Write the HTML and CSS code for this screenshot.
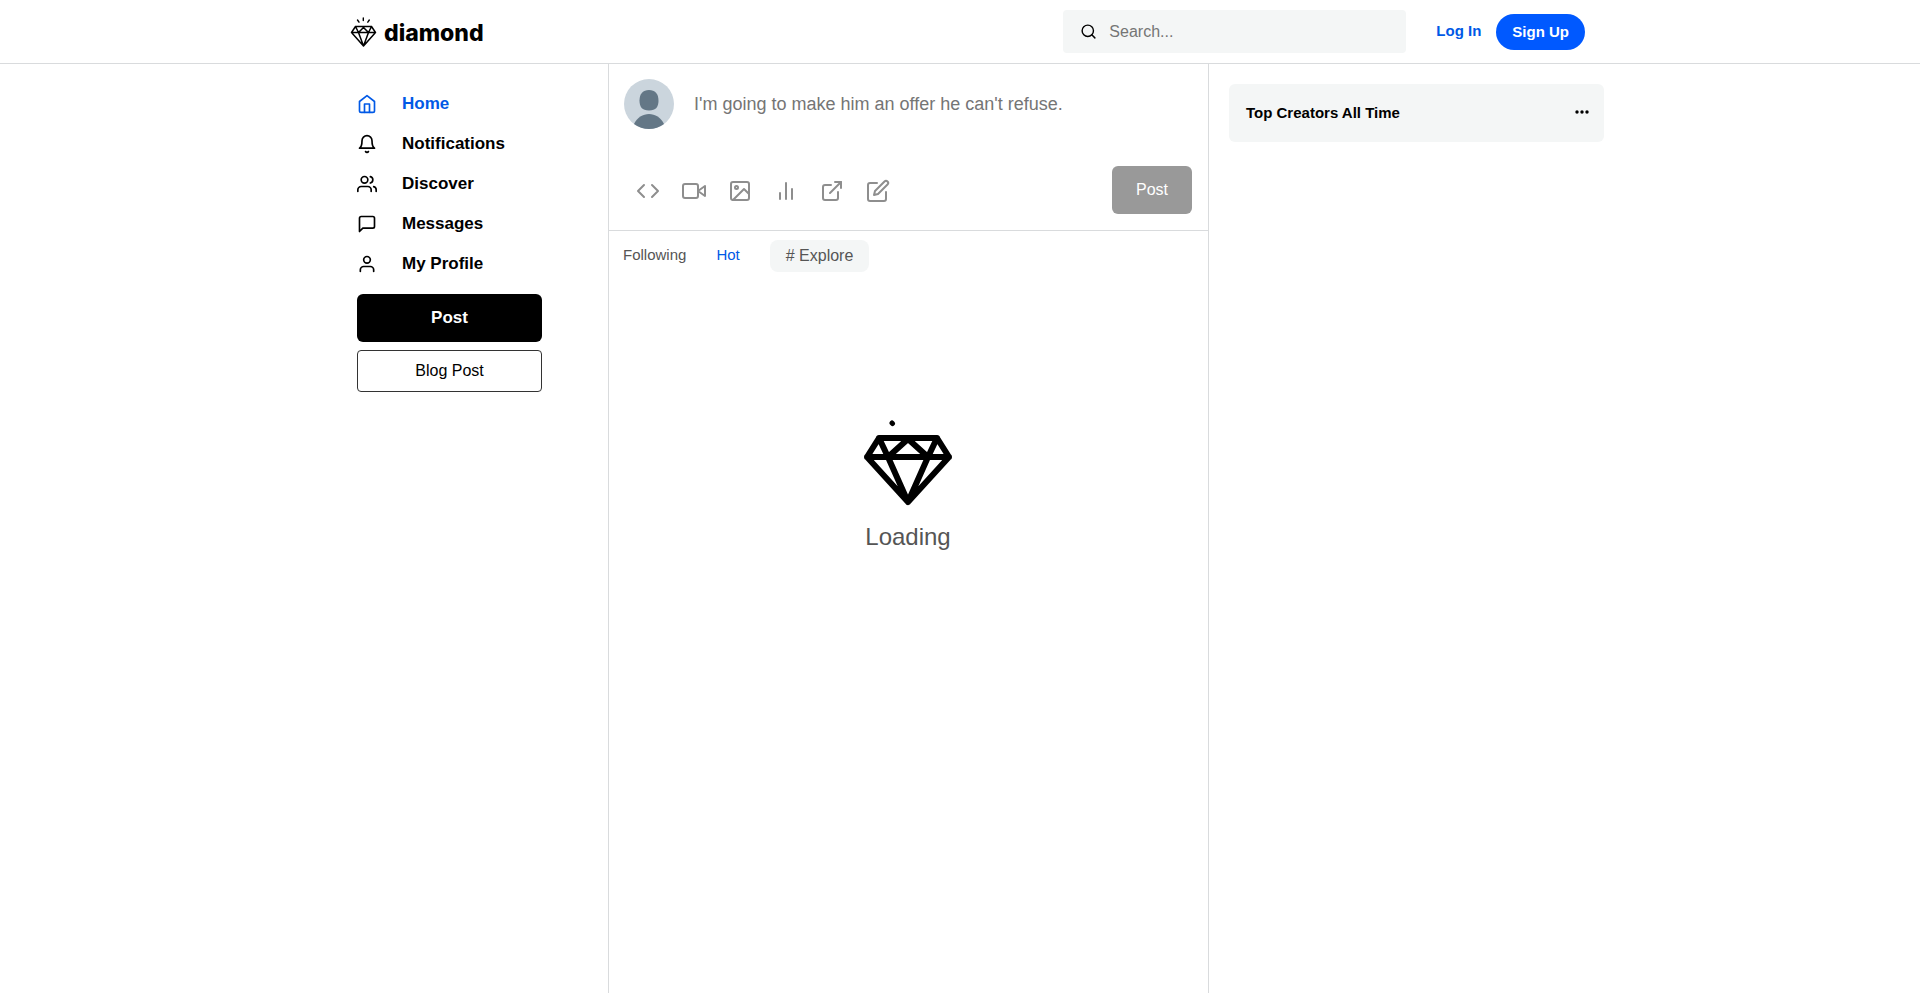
FILE: index.html
```
<!DOCTYPE html>
<html lang="en">
<head>
  <meta charset="UTF-8">
  <meta name="viewport" content="width=device-width, initial-scale=1.0">
  <title>Diamond</title>
  <link rel="stylesheet" href="styles.css">
</head>
<body>
  <header class="topbar">
    <div class="topbar-inner">
      <a href="#" class="logo" aria-label="diamond">
        <svg class="logo-mark" viewBox="0 0 28 32" fill="none" stroke="#000" stroke-width="1.500" stroke-linecap="round" stroke-linejoin="round">
          <path d="M5.500 10.500h16l4 6-12 13.500-12-13.500z M1.500 16.500h24 M5.500 10.500l3 6 5 13.500 5-13.500 3-6 M8.500 16.500l5-5 5 5"/>
          <path stroke-width="1.400" d="M13.300 2v2.500 M7.500 4l1.500 2.200 M19.300 4l-1.500 2.200"/>
        </svg>
        <span class="logo-text">diamond</span>
      </a>
      <form class="search">
        <label for="search" aria-label="Search">
          <svg class="search-icon" viewBox="0 0 24 24"><circle cx="11" cy="11" r="8"/><path d="M21 21l-4.350-4.350"/></svg>
        </label>
        <input type="text" id="search" placeholder="Search...">
      </form>
      <a href="#" class="login">Log In</a>
      <button type="button" class="signup">Sign Up</button>
    </div>
  </header>

  <div class="layout">
    <aside class="sidebar">
      <nav class="menu">
        <a href="#" class="menu-item active">
          <svg viewBox="0 0 24 24"><path d="M3 9l9-7 9 7v11a2 2 0 0 1-2 2H5a2 2 0 0 1-2-2z"/><path d="M9 22V12h6v10"/></svg>
          <span>Home</span>
        </a>
        <a href="#" class="menu-item">
          <svg viewBox="0 0 24 24"><path d="M18 8A6 6 0 0 0 6 8c0 7-3 9-3 9h18s-3-2-3-9"/><path d="M13.730 21a2 2 0 0 1-3.460 0"/></svg>
          <span>Notifications</span>
        </a>
        <a href="#" class="menu-item">
          <svg viewBox="0 0 24 24"><path d="M17 21v-2a4 4 0 0 0-4-4H5a4 4 0 0 0-4 4v2"/><circle cx="9" cy="7" r="4"/><path d="M23 21v-2a4 4 0 0 0-3-3.870"/><path d="M16 3.130a4 4 0 0 1 0 7.750"/></svg>
          <span>Discover</span>
        </a>
        <a href="#" class="menu-item">
          <svg viewBox="0 0 24 24"><path d="M21 15a2 2 0 0 1-2 2H7l-4 4V5a2 2 0 0 1 2-2h14a2 2 0 0 1 2 2z"/></svg>
          <span>Messages</span>
        </a>
        <a href="#" class="menu-item">
          <svg viewBox="0 0 24 24"><path d="M20 21v-2a4 4 0 0 0-4-4H8a4 4 0 0 0-4 4v2"/><circle cx="12" cy="7" r="4"/></svg>
          <span>My Profile</span>
        </a>
      </nav>
      <button type="button" class="btn-post">Post</button>
      <button type="button" class="btn-blog">Blog Post</button>
    </aside>

    <main class="feed">
      <form class="composer">
        <div class="composer-top">
          <svg class="avatar" viewBox="0 0 50 50">
            <circle cx="25" cy="25" r="25" fill="#cbd5dd"/>
            <path fill="#647786" d="M25 11c6 0 9.500 4 9.500 10.500S32 31.500 25 31.500 15.500 28 15.500 21.500 19 11 25 11z"/>
            <path fill="#647786" d="M10 45c3-6.500 9-10 15-10s12 3.500 15 10a25 25 0 0 1-30 0z"/>
          </svg>
          <textarea id="post-text" rows="1" aria-label="New post" placeholder="I'm going to make him an offer he can't refuse."></textarea>
        </div>
        <div class="composer-bottom">
          <div class="tools">
            <button type="button" aria-label="Embed"><svg viewBox="0 0 24 24"><path d="M16 18l6-6-6-6"/><path d="M8 6l-6 6 6 6"/></svg></button>
            <button type="button" aria-label="Video"><svg viewBox="0 0 24 24"><path d="M23 7l-7 5 7 5z"/><rect x="1" y="5" width="15" height="14" rx="2"/></svg></button>
            <button type="button" aria-label="Image"><svg viewBox="0 0 24 24"><rect x="3" y="3" width="18" height="18" rx="2"/><circle cx="8.500" cy="8.500" r="1.500"/><path d="M21 15l-5-5L5 21"/></svg></button>
            <button type="button" aria-label="Poll"><svg viewBox="0 0 24 24"><path d="M18 20V10"/><path d="M12 20V4"/><path d="M6 20v-6"/></svg></button>
            <button type="button" aria-label="Link"><svg viewBox="0 0 24 24"><path d="M18 13v6a2 2 0 0 1-2 2H5a2 2 0 0 1-2-2V8a2 2 0 0 1 2-2h6"/><path d="M15 3h6v6"/><path d="M10 14L21 3"/></svg></button>
            <button type="button" aria-label="Blog"><svg viewBox="0 0 24 24"><path d="M11 4H4a2 2 0 0 0-2 2v14a2 2 0 0 0 2 2h14a2 2 0 0 0 2-2v-7"/><path d="M18.500 2.500a2.121 2.121 0 0 1 3 3L12 15l-4 1 1-4z"/></svg></button>
          </div>
          <button type="submit" class="btn-submit" disabled>Post</button>
        </div>
      </form>

      <nav class="tabs">
        <a href="#">Following</a>
        <a href="#" class="active">Hot</a>
        <a href="#" class="explore"># Explore</a>
      </nav>

      <div class="loading">
        <svg viewBox="0 0 92 88" fill="none" stroke="#000" stroke-width="6" stroke-linecap="round" stroke-linejoin="round">
          <path d="M17 18h58l12 19-41 45L5 37z M5 37h82 M17 18l9 19 20 45 20-45 9-19 M26 37l20-18 20 18"/>
          <path stroke-width="5" d="M30 3l.500 .500"/>
        </svg>
        <p>Loading</p>
      </div>
    </main>

    <aside class="rightbar">
      <section class="card">
        <h2>Top Creators All Time</h2>
        <button type="button" aria-label="More">
          <svg viewBox="0 0 14 4"><circle cx="2" cy="2" r="1.700"/><circle cx="7" cy="2" r="1.700"/><circle cx="12" cy="2" r="1.700"/></svg>
        </button>
      </section>
    </aside>
  </div>
</body>
</html>
```

FILE: styles.css
```
* {
  box-sizing: border-box;
}
body {
  margin: 0;
  min-height: 100vh;
  display: flex;
  flex-direction: column;
  font-family: "Liberation Sans", Arial, sans-serif;
  font-size: 16px;
  color: #000;
  background-color: #fff;
}
a {
  color: inherit;
  text-decoration: none;
}
button {
  font-family: inherit;
  cursor: pointer;
}
input,
textarea {
  font-family: inherit;
  border: none;
  outline: none;
  background: none;
  padding: 0;
}
input::placeholder,
textarea::placeholder {
  color: #757575;
}

/* Header */
.topbar {
  border-bottom: 1px solid #d9dbdd;
}
.topbar-inner {
  max-width: 1288px;
  height: 63px;
  margin: 0 auto;
  padding: 0 19px 0 34px;
  display: flex;
  align-items: center;
}
.logo {
  display: flex;
  align-items: center;
  gap: 6px;
  margin-right: auto;
}
.logo-mark {
  width: 28px;
  height: 32px;
}
.logo-text {
  padding-top: 3px;
  font-family: Inter, sans-serif;
  font-size: 23px;
  font-weight: 800;
  line-height: 32px;
}
.search {
  display: flex;
  align-items: center;
  gap: 12px;
  width: 343px;
  height: 43px;
  padding: 0 17px;
  border-radius: 4px;
  background-color: #f4f6f6;
}
.search label {
  display: flex;
}
.search input {
  flex: 1;
  min-width: 0;
  font-size: 16px;
}
.search-icon {
  width: 17px;
  height: 17px;
}
.search-icon,
.menu-item svg,
.tools svg {
  fill: none;
  stroke: currentColor;
  stroke-width: 2;
  stroke-linecap: round;
  stroke-linejoin: round;
}
.login {
  margin: 0 15px 0 30px;
  padding-bottom: 2px;
  color: #0059e6;
  font-size: 15px;
  font-weight: bold;
}
.signup {
  height: 36px;
  padding: 0 16px;
  border: none;
  border-radius: 18px;
  background-color: #0059ff;
  color: #fff;
  font-size: 15px;
  font-weight: bold;
}

/* Columns */
.layout {
  flex: 1;
  width: 100%;
  max-width: 1288px;
  margin: 0 auto;
  display: grid;
  grid-template-columns: 292px 601px 1fr;
}

/* Sidebar */
.sidebar {
  padding: 20px 66px 20px 41px;
}
.menu {
  margin-bottom: 10px;
}
.menu-item {
  display: flex;
  align-items: center;
  gap: 25px;
  height: 40px;
  font-size: 17px;
  font-weight: bold;
}
.menu-item svg {
  width: 20px;
  height: 20px;
}
.menu-item.active {
  color: #0059e6;
}
.btn-post,
.btn-blog {
  display: block;
  width: 100%;
  border-radius: 6px;
}
.btn-post {
  height: 48px;
  margin-bottom: 8px;
  border: none;
  background-color: #000;
  color: #fff;
  font-size: 17px;
  font-weight: bold;
}
.btn-blog {
  height: 42px;
  border: 1px solid #333;
  border-radius: 4px;
  background-color: #fff;
  color: #000;
  font-size: 16px;
}

/* Feed */
.feed {
  border-left: 1px solid #d9dbdd;
  border-right: 1px solid #d9dbdd;
}
.composer {
  padding: 15px 16px 16px 15px;
  border-bottom: 1px solid #d9dbdd;
}
.composer-top {
  display: flex;
  align-items: center;
  gap: 20px;
  margin-bottom: 37px;
}
.avatar {
  width: 50px;
  height: 50px;
}
.composer textarea {
  flex: 1;
  height: 24px;
  font-size: 18px;
  line-height: 24px;
  resize: none;
  overflow: hidden;
}
.composer-bottom {
  display: flex;
  align-items: center;
  justify-content: space-between;
}
.tools {
  display: flex;
  gap: 22px;
  padding: 2px 0 0 12px;
}
.tools button {
  display: flex;
  padding: 0;
  border: none;
  background: none;
  color: #8e8e8e;
}
.tools svg {
  width: 24px;
  height: 24px;
}
.btn-submit {
  width: 80px;
  height: 48px;
  border: none;
  border-radius: 6px;
  background-color: #999;
  color: #fff;
  font-size: 16px;
}
.tabs {
  display: flex;
  align-items: flex-start;
  gap: 30px;
  padding: 9px 14px;
  color: #555;
  font-size: 15px;
  line-height: 30px;
}
.tabs .active {
  color: #0059e6;
}
.tabs .explore {
  padding: 0 16px;
  border-radius: 8px;
  background-color: #f4f6f6;
  font-size: 16px;
  line-height: 32px;
}
.loading {
  display: flex;
  flex-direction: column;
  align-items: center;
  padding: 139px 1px 0 0;
  color: #555;
  font-size: 24px;
}
.loading svg {
  width: 92px;
  height: 88px;
}
.loading p {
  margin: 15px 0 0;
  line-height: 28px;
}

/* Right column */
.rightbar {
  padding: 20px 0 20px 20px;
}
.card {
  display: flex;
  align-items: center;
  justify-content: space-between;
  height: 58px;
  padding: 0 15px 2px 17px;
  border-radius: 6px;
  background-color: #f4f6f6;
}
.card h2 {
  margin: 0;
  font-size: 15px;
}
.card button {
  display: flex;
  padding: 0;
  border: none;
  background: none;
}
.card svg {
  width: 14px;
  height: 4px;
}
```
